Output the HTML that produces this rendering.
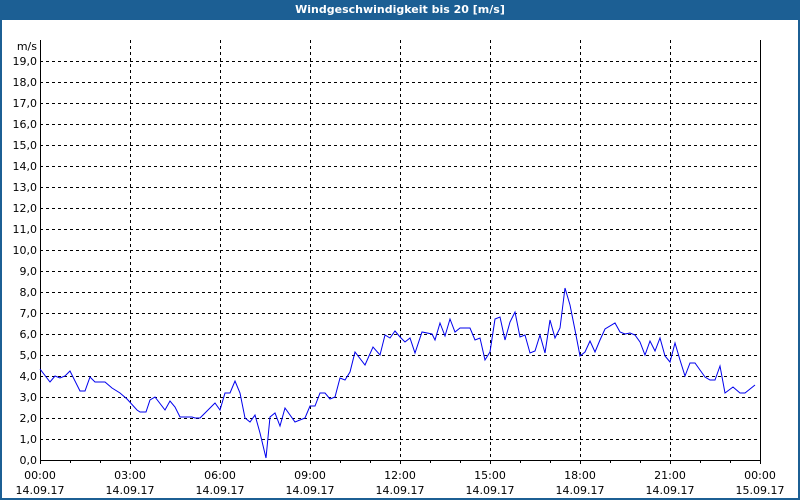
<!DOCTYPE html>
<html><head><meta charset="utf-8"><style>
html,body{margin:0;padding:0;background:#fff}
body{width:800px;height:500px;position:relative;overflow:hidden;font-family:"DejaVu Sans","Liberation Sans",sans-serif}
.frame{position:absolute;left:0;top:0;width:796px;height:496px;border:2px solid #1c5f94}
.title{position:absolute;left:0;top:0;width:800px;height:20px;background:#1c5f94;color:#fff;font-weight:bold;font-size:11px;line-height:20px;text-align:center}
svg{position:absolute;left:0;top:0}
text{font-family:"DejaVu Sans","Liberation Sans",sans-serif;font-size:11px;fill:#000}
</style></head><body>
<div class="frame"></div>
<div class="title">Windgeschwindigkeit bis 20 [m/s]</div>
<svg width="800" height="500" viewBox="0 0 800 500">
<g stroke="#000" stroke-width="1" stroke-dasharray="3,3" fill="none" shape-rendering="crispEdges">
<path d="M40 61.5H760M40 82.5H760M40 103.5H760M40 124.5H760M40 145.5H760M40 166.5H760M40 187.5H760M40 208.5H760M40 229.5H760M40 250.5H760M40 271.5H760M40 292.5H760M40 313.5H760M40 334.5H760M40 355.5H760M40 376.5H760M40 397.5H760M40 418.5H760M40 439.5H760"/>
<path d="M130.5 40V460M220.5 40V460M310.5 40V460M400.5 40V460M490.5 40V460M580.5 40V460M670.5 40V460"/>
</g>
<g stroke="#000" stroke-width="1" fill="none" shape-rendering="crispEdges">
<path d="M40.5 40V460.5H760.5V40"/>
<path d="M40.5 460V464M70.5 460V463M100.5 460V463M130.5 460V464M160.5 460V463M190.5 460V463M220.5 460V464M250.5 460V463M280.5 460V463M310.5 460V464M340.5 460V463M370.5 460V463M400.5 460V464M430.5 460V463M460.5 460V463M490.5 460V464M520.5 460V463M550.5 460V463M580.5 460V464M610.5 460V463M640.5 460V463M670.5 460V464M700.5 460V463M730.5 460V463M760.5 460V464"/>
</g>
<polyline fill="none" stroke="#0000ee" stroke-width="1" points="40,369 50,382 55,376 60,378 65,376 70,371 80,391 85,391 90,377 95,382 105,382 112,388 120,393 127,399 137,410 140,412 146,412 150,400 155,397 165,410 170,401 175,407 180,417 192,417 195,418 200,418 205,413 212,406 215,403 220,410 225,393 230,393 235,381 240,393 245,418 250,422 255,415 260,433 266,458 270,417 275,413 280,426 285,408 295,422 305,418 310,406 315,406 320,393 325,393 330,399 335,397 340,378 345,380 350,372 355,352 365,365 373,347 380,355 385,335 390,338 395,331 400,337 405,342 410,338 415,353 422,332 432,334 435,340 440,323 445,336 450,319 455,332 460,328 470,328 475,340 480,338 485,360 490,352 495,319 500,317 505,340 510,322 515,312 520,337 525,335 530,353 535,351 540,335 545,353 550,320 555,338 560,328 565,288 570,305 575,330 580,356 585,352 590,341 595,352 600,340 605,329 615,323 620,332 625,334 630,333 635,335 640,342 645,355 650,341 655,351 660,338 665,356 670,362 675,343 680,360 685,376 690,363 695,363 700,370 705,377 710,380 715,380 720,366 725,393 733,387 740,393 745,393 755,385"/>
<text x="37" y="50" text-anchor="end">m/s</text>
<g text-anchor="end">
<text x="37" y="65">19,0</text><text x="37" y="86">18,0</text><text x="37" y="107">17,0</text><text x="37" y="128">16,0</text><text x="37" y="149">15,0</text><text x="37" y="170">14,0</text><text x="37" y="191">13,0</text><text x="37" y="212">12,0</text><text x="37" y="233">11,0</text><text x="37" y="254">10,0</text><text x="37" y="275">9,0</text><text x="37" y="296">8,0</text><text x="37" y="317">7,0</text><text x="37" y="338">6,0</text><text x="37" y="359">5,0</text><text x="37" y="380">4,0</text><text x="37" y="401">3,0</text><text x="37" y="422">2,0</text><text x="37" y="443">1,0</text><text x="37" y="464">0,0</text>
</g>
<g text-anchor="middle">
<text x="40" y="479">00:00</text><text x="40" y="494">14.09.17</text>
<text x="130" y="479">03:00</text><text x="130" y="494">14.09.17</text>
<text x="220" y="479">06:00</text><text x="220" y="494">14.09.17</text>
<text x="310" y="479">09:00</text><text x="310" y="494">14.09.17</text>
<text x="400" y="479">12:00</text><text x="400" y="494">14.09.17</text>
<text x="490" y="479">15:00</text><text x="490" y="494">14.09.17</text>
<text x="580" y="479">18:00</text><text x="580" y="494">14.09.17</text>
<text x="670" y="479">21:00</text><text x="670" y="494">14.09.17</text>
<text x="760" y="479">00:00</text><text x="760" y="494">15.09.17</text>
</g>
</svg>
</body></html>
